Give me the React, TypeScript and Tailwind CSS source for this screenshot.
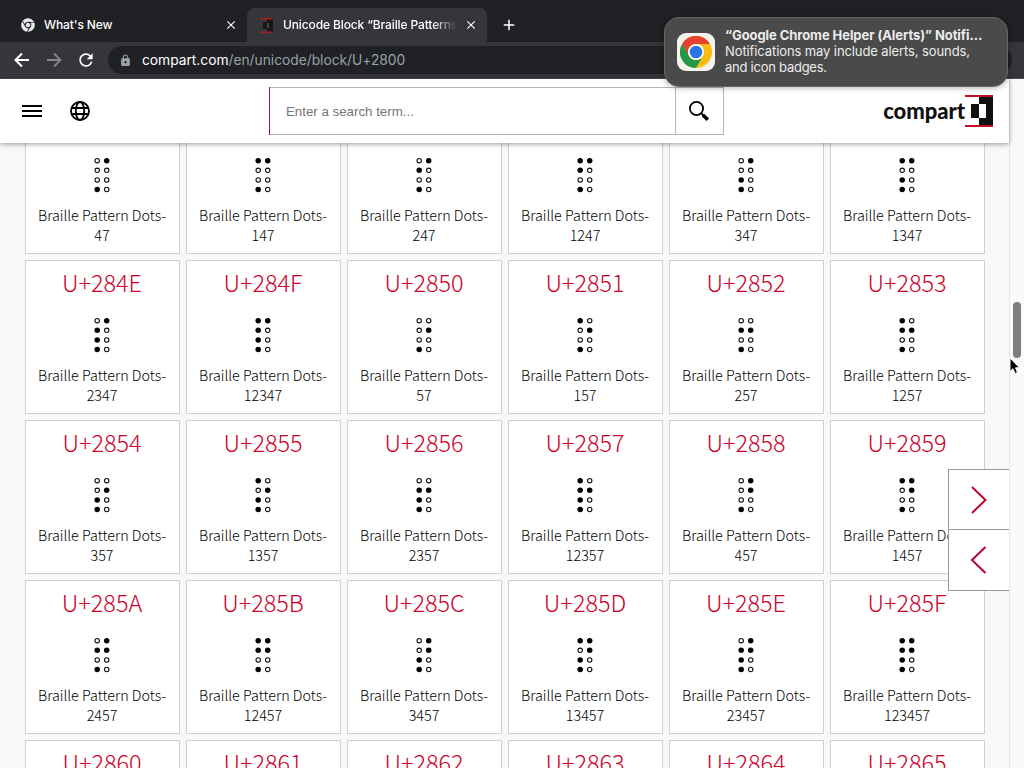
import { FaChrome } from "react-icons/fa";
import { MdRefresh, MdClose, MdAdd, MdLock } from "react-icons/md";

const FIRST = 0x2848;
const LAST = 0x2865;

const codes = Array.from({ length: LAST - FIRST + 1 }, (_, i) => FIRST + i);

// dot numbers in reading order, two per row
const DOTS = [1, 4, 2, 5, 3, 6, 7, 8];

const isRaised = (code: number, dot: number) => ((code - 0x2800) & (1 << (dot - 1))) !== 0;

const dotName = (code: number) => [1, 2, 3, 4, 5, 6, 7, 8].filter((d) => isRaised(code, d)).join("");

const BrailleCell = ({ code }: { code: number }) => (
  <svg width="16" height="40" viewBox="0 0 16 40" className="mx-auto block">
    {DOTS.map((dot, i) => (
      <circle
        key={dot}
        cx={i % 2 === 0 ? 3.2 : 12.7}
        cy={5.7 + Math.floor(i / 2) * 9.6}
        r={isRaised(code, dot) ? 2.75 : 2.2}
        fill={isRaised(code, dot) ? "#000" : "none"}
        stroke="#111"
        strokeWidth={isRaised(code, dot) ? 0 : 1.1}
      />
    ))}
  </svg>
);

const CodeCard = ({ code }: { code: number }) => (
  <a className="block h-[154px] border border-[#cfcfcf] bg-white pt-[3px] pr-px text-center font-['Noto_Sans_CJK_SC',sans-serif] font-light">
    <div className="h-[36px] text-[23.4px] leading-[36px] text-[#cc0029]">U+{code.toString(16).toUpperCase()}</div>
    <div className="mt-[15px]">
      <BrailleCell code={code} />
    </div>
    <div className="mt-[10px] text-[14.35px] leading-5 text-black">
      Braille Pattern Dots-
      <br />
      {dotName(code)}
    </div>
  </a>
);

const CompartMark = ({ className }: { className?: string }) => (
  <svg viewBox="0 0 28 32" className={className}>
    <path d="M0 0H28V2H0ZM0 30H28V32H0Z" fill="#c01020" />
    <path d="M14 2H28V30H14V23H21V9H14Z" fill="#111" />
    <path d="M6 9H14V23H6Z" fill="#111" />
    <path d="M14 9H21V23H14Z" fill="#fff" />
  </svg>
);

const TabStrip = () => (
  <div className="flex h-[42px] items-end bg-[#202124] text-[12.5px] font-medium text-white">
    <div className="flex h-[34px] w-[247px] items-center pl-[21px] pr-[9px]">
      <FaChrome className="size-[14px] text-[#e8eaed]" />
      <span className="ml-[9px] flex-1 text-[12px] tracking-[-0.1px]">What's New</span>
      <MdClose className="size-[14px]" />
    </div>
    <div className="flex h-[34px] w-[240px] items-center rounded-t-lg bg-[#35363a] pl-[13px] pr-[9px]">
      <svg width="14" height="15" viewBox="0 0 14 15" className="shrink-0">
        <path d="M3 4H7V11H3ZM7 1H13V14H7Z" fill="#161616" />
        <path d="M7 5H9V10H7Z" fill="#444" />
        <path d="M0 0H13V1.500H0ZM0 13.500H13V15H0Z" fill="#a91d22" />
      </svg>
      <span className="ml-[9px] w-[174px] overflow-hidden whitespace-nowrap text-[12px] tracking-[-0.12px] [mask-image:linear-gradient(to_right,black_86%,transparent)]">
        Unicode Block “Braille Patterns”
      </span>
      <MdClose className="ml-auto size-[14px] shrink-0" />
    </div>
    <MdAdd className="mb-[8px] ml-[13px] size-[18px]" />
  </div>
);

const Toolbar = () => (
  <div className="flex h-[37px] items-center border-b border-[#4a4b4f] bg-[#35363a] pl-[13px] pr-3">
    <svg width="18" height="18" viewBox="0 0 18 18" fill="none" stroke="#fff" strokeWidth="2">
      <path d="M16 9H3M9 2.500L2.500 9L9 15.500" />
    </svg>
    <svg width="18" height="18" viewBox="0 0 18 18" fill="none" stroke="#85868a" strokeWidth="1.8" className="ml-[14px]">
      <path d="M2 9H15M9 2.500L15.500 9L9 15.500" />
    </svg>
    <MdRefresh className="ml-[13px] size-[20px] text-white" />
    <div className="ml-[12px] flex h-[28px] flex-1 items-center rounded-full bg-[#202124] pl-[11px] text-[13.8px] text-[#9aa0a6]">
      <MdLock className="size-[13px]" />
      <span className="ml-[10px] tracking-[-0.02px]">
        <span className="text-white">compart.com</span>/en/unicode/block/U+2800
      </span>
    </div>
  </div>
);

const Header = () => (
  <header className="relative z-10 flex h-16 shrink-0 items-center bg-white pl-[22px] pr-[16px] shadow-[0_1px_5px_rgba(0,0,0,0.4)]">
    <div className="flex w-[20px] flex-col gap-[3px]">
      <div className="h-[2px] bg-black" />
      <div className="h-[2px] bg-black" />
      <div className="h-[2px] bg-black" />
    </div>
    <svg width="20" height="20" viewBox="0 0 20 20" className="ml-[28px]" fill="none" stroke="#000" strokeWidth="1.8">
      <circle cx="10" cy="10" r="9" />
      <ellipse cx="10" cy="10" rx="4.2" ry="9" />
      <path d="M1.8 7H18.2M1.8 13H18.2" />
    </svg>
    <div className="ml-[179px] flex h-[48px] w-[455px] border-y border-r border-y-[#b5b5b5] border-r-[#b5b5b5]">
      <div className="-my-px w-px shrink-0 bg-[#b0102c]" />
      <div className="flex flex-1 items-center pl-4 pt-[2px] text-[13.3px] text-[#757575] font-['Liberation_Sans',Arial,sans-serif]">
        Enter a search term...
      </div>
      <div className="flex w-[48px] items-center justify-center border-l border-[#b5b5b5] pr-[2px]">
        <svg width="22" height="22" viewBox="0 0 22 22" fill="none" stroke="#000">
          <circle cx="8.5" cy="8.5" r="6.6" strokeWidth="1.8" />
          <path d="M13.4 13.4L15.5 15.5" strokeWidth="2" />
          <path d="M15 15L19.8 19.8" strokeWidth="3.6" />
        </svg>
      </div>
    </div>
    <div className="ml-auto flex items-center">
      <span className="text-[22px] font-black leading-8 tracking-[-0.05px] text-[#111] font-['Lato',sans-serif]">compart</span>
      <CompartMark className="h-[32px] w-[28px]" />
    </div>
  </header>
);

const PageArrows = () => (
  <div className="absolute right-0 top-[469px] w-[61px] border border-r-0 border-[#999] bg-white">
    {["M6 3L19.500 16L6 29", "M19.500 3L6 16L19.500 29"].map((d, i) => (
      <div key={d} className={i === 0 ? "flex h-[60px] items-center justify-center border-b border-[#999]" : "flex h-[60px] items-center justify-center"}>
        <svg width="26" height="32" viewBox="0 0 26 32" fill="none" stroke="#b8082f" strokeWidth="2">
          <path d={d} />
        </svg>
      </div>
    ))}
  </div>
);

const Notification = () => (
  <div className="absolute left-[664px] top-[17px] z-20 flex h-[70px] w-[344px] rounded-[15px] border border-[#686868] bg-[#4a4a4a] pl-[12px] pt-[9px] shadow-[0_1px_6px_rgba(0,0,0,0.3)]">
    <div className="mt-[6px] flex size-[38px] items-center justify-center rounded-[9px] bg-[#f4f3f0]">
      <svg width="32" height="32" viewBox="0 0 32 32">
        <circle cx="16" cy="16" r="16" fill="#fbbc12" />
        <path d="M2.140 8A16 16 0 0 1 29.860 8H16A8 8 0 0 0 9.070 20Z" fill="#e8402f" />
        <path d="M2.140 8A16 16 0 0 0 16 32L22.930 20A8 8 0 0 1 9.070 20Z" fill="#249a48" />
        <circle cx="16" cy="16" r="8" fill="#fff" />
        <circle cx="16" cy="16" r="6.300" fill="#2b73e0" />
      </svg>
    </div>
    <div className="ml-[10px] whitespace-nowrap text-[13px] leading-4 text-[#ececec]">
      <div className="font-bold tracking-[-0.07px]">“Google Chrome Helper (Alerts)” Notifi...</div>
      <div className="tracking-[-0.1px]">Notifications may include alerts, sounds,</div>
      <div className="tracking-[-0.25px]">and icon badges.</div>
    </div>
  </div>
);

const App = () => {
  return (
    <div className="relative flex h-screen w-screen flex-col overflow-hidden bg-[#f8f8f8] font-['Inter',sans-serif]">
      <TabStrip />
      <Toolbar />
      <div className="flex min-h-0 flex-1">
        <div className="flex w-[1009px] flex-col">
          <Header />
          <main className="min-h-0 flex-1 overflow-hidden px-[25px]">
            <div className="-mt-[43px] grid w-[960px] grid-cols-6 gap-[6px]">
              {codes.map((code) => (
                <CodeCard key={code} code={code} />
              ))}
            </div>
          </main>
        </div>
        <div className="flex-1 border-l border-[#e6e6e6] bg-[#fafafa] pl-[3px] pt-[223px]">
          <div className="h-[56px] w-[8px] rounded-full bg-[#7d7d7d]" />
        </div>
      </div>
      <div className="absolute left-0 top-0 w-[1009px]">
        <PageArrows />
      </div>
      <Notification />
      <svg width="12" height="18" viewBox="0 0 12 18" className="absolute left-[1009px] top-[357px] z-20">
        <path d="M1 1V14.500L4 11.700L6 16.500L8.500 15.400L6.500 10.800H10.500Z" fill="#000" stroke="#fff" />
      </svg>
    </div>
  );
};

export default App;
